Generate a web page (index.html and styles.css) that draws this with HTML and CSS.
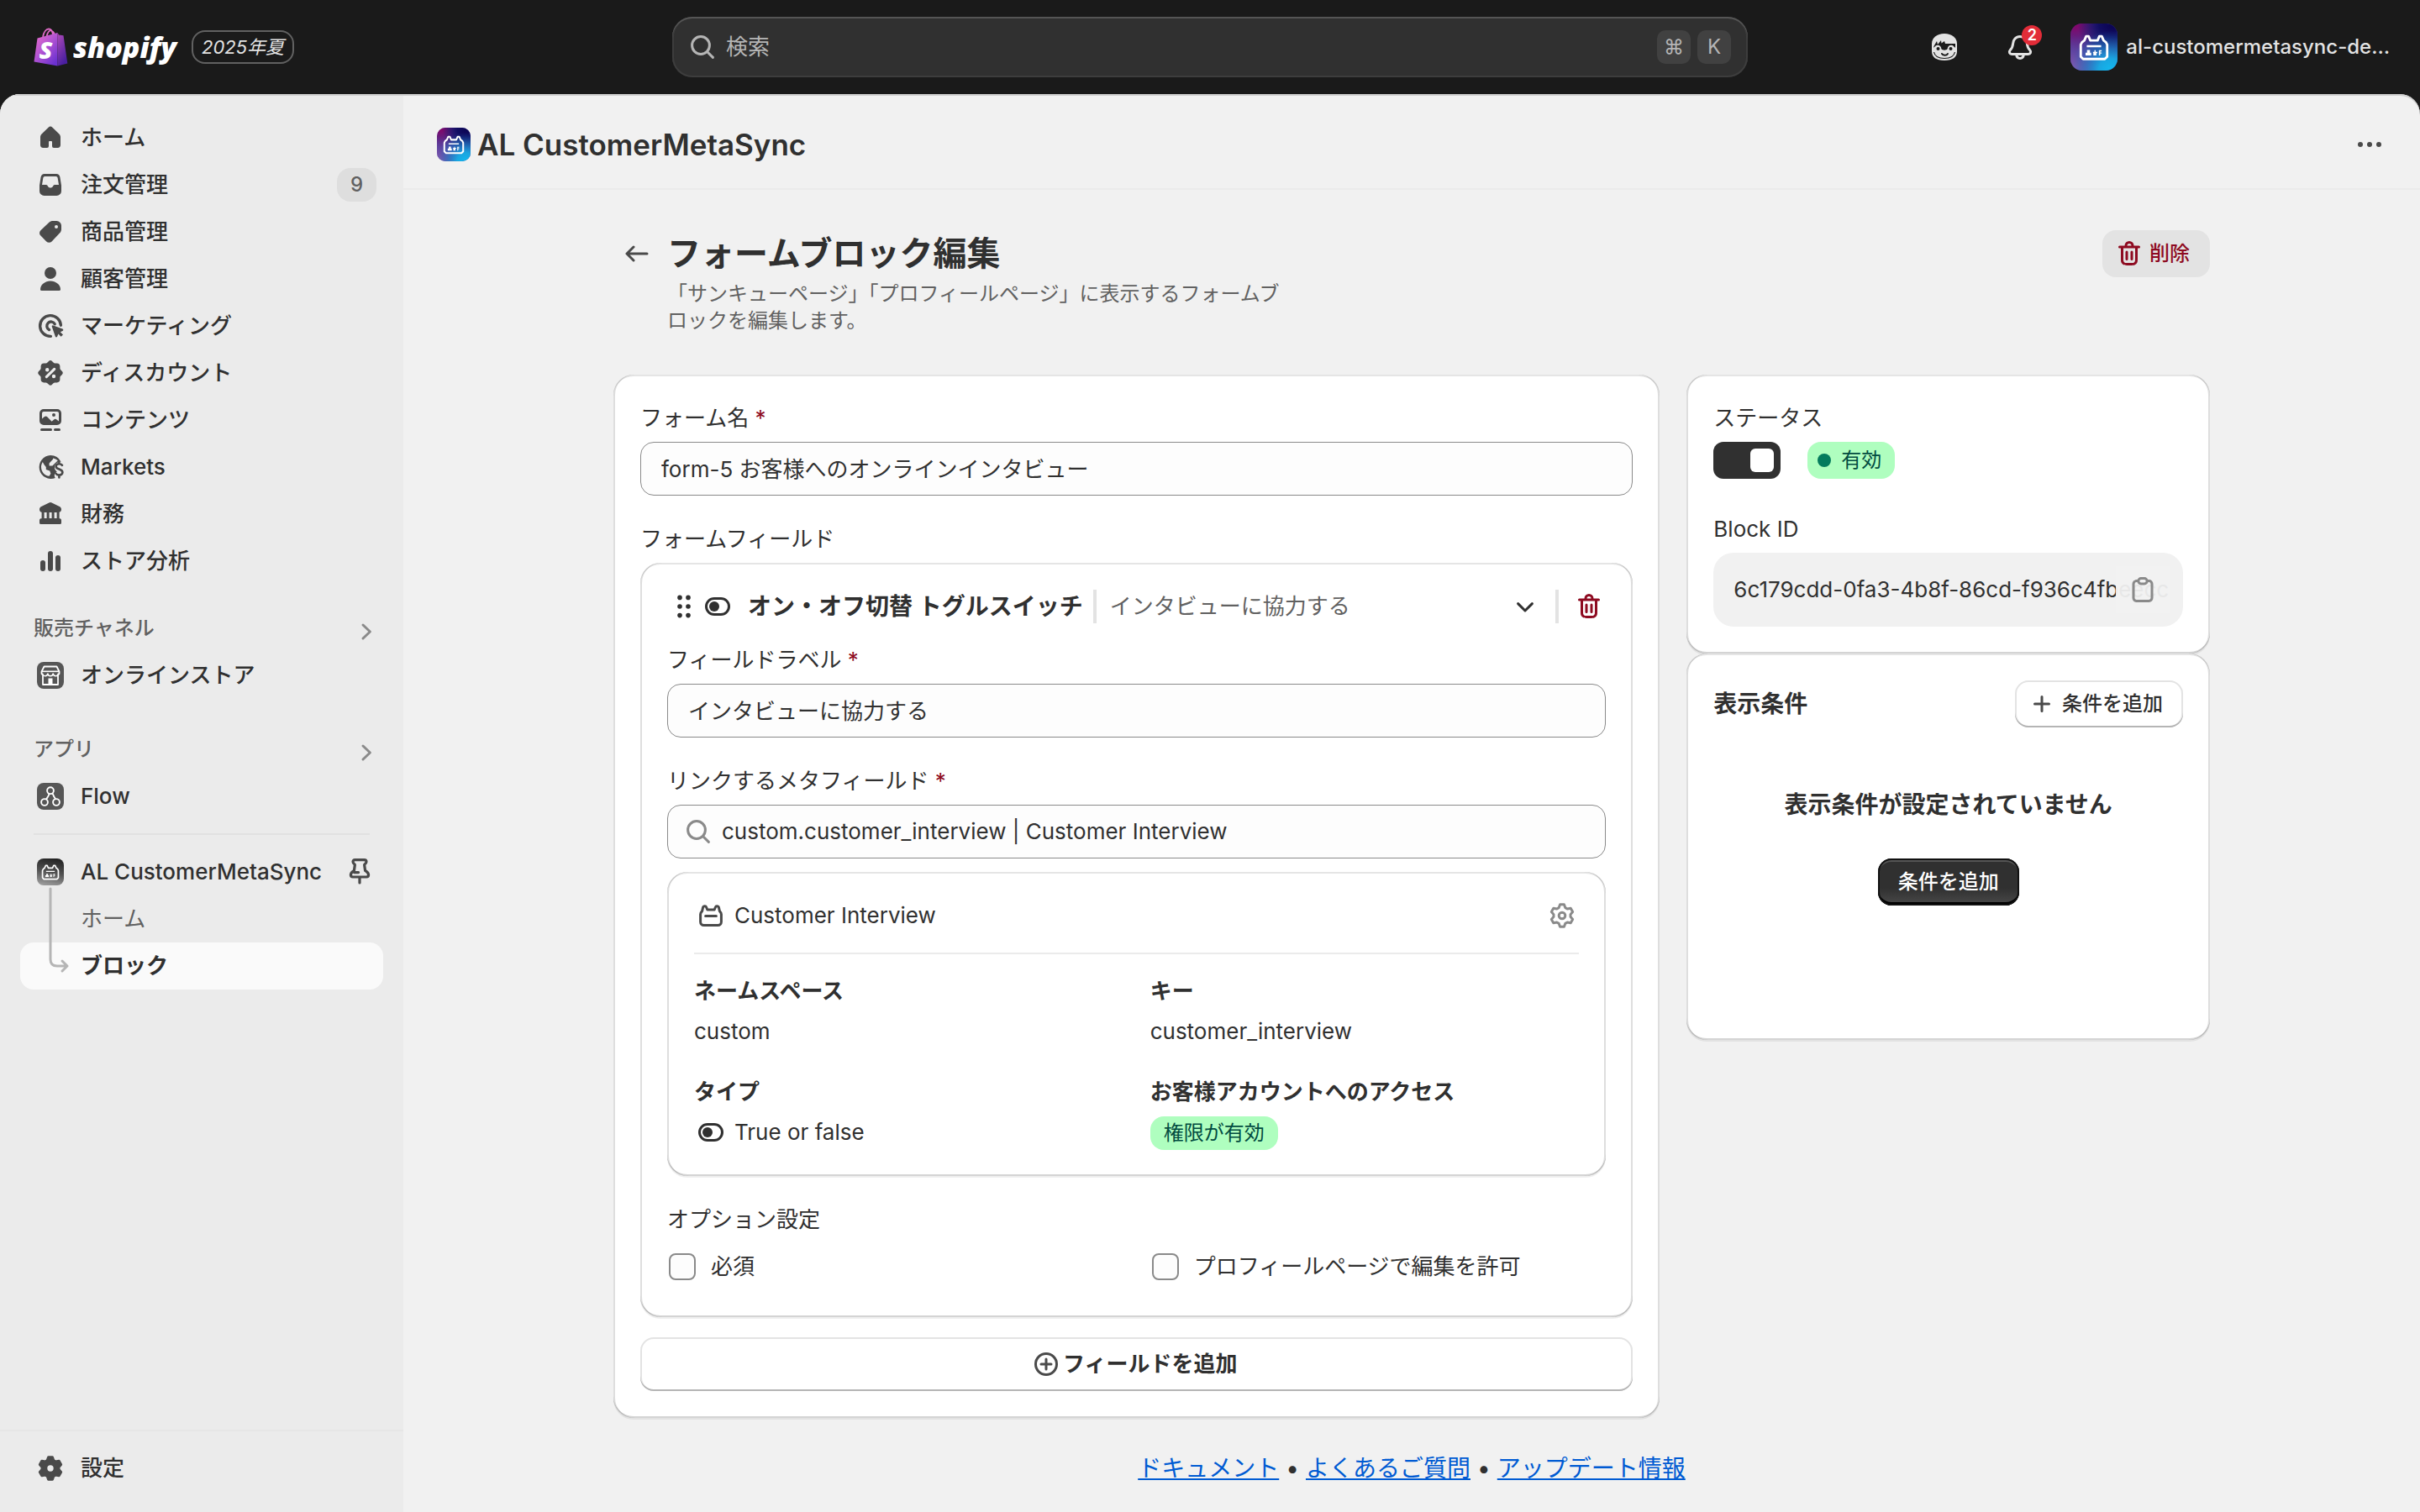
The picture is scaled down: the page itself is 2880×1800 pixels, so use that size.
FILE: index.html
```html
<!DOCTYPE html>
<html lang="ja">
<head>
<meta charset="utf-8">
<meta name="viewport" content="width=device-width, initial-scale=1">
<title>AL CustomerMetaSync</title>
<link rel="stylesheet" href="styles.css">
</head>
<body>
<svg class="sprite" aria-hidden="true">
  <defs>
    <radialGradient id="g-magenta" cx="0.1" cy="0" r="0.6"><stop offset="0" stop-color="#8a0064"/><stop offset="1" stop-color="#8a0064" stop-opacity="0"/></radialGradient>
    <radialGradient id="g-navy" cx="0.9" cy="0" r="0.75"><stop offset="0" stop-color="#0a0350"/><stop offset="0.4" stop-color="#120d62"/><stop offset="1" stop-color="#120d62" stop-opacity="0"/></radialGradient>
    <radialGradient id="g-violet" cx="0" cy="1" r="0.75"><stop offset="0" stop-color="#8a63b4"/><stop offset="1" stop-color="#8a3a9e" stop-opacity="0"/></radialGradient>
    <radialGradient id="g-cyan" cx="0.85" cy="1" r="0.85"><stop offset="0" stop-color="#12b8ee"/><stop offset="0.3" stop-color="#1aa5e0"/><stop offset="1" stop-color="#1a70c0" stop-opacity="0"/></radialGradient>
    <linearGradient id="g-gray" x1="0.6" y1="0" x2="0.4" y2="1"><stop offset="0" stop-color="#242424"/><stop offset="0.5" stop-color="#505050"/><stop offset="1" stop-color="#9a9a9a"/></linearGradient>
    <linearGradient id="g-bag" x1="0" y1="0" x2="0.8" y2="1"><stop offset="0" stop-color="#ee6fcb"/><stop offset="0.5" stop-color="#b354d2"/><stop offset="1" stop-color="#6a30d0"/></linearGradient>
    <linearGradient id="g-bag-side" x1="0" y1="0" x2="0.4" y2="1"><stop offset="0" stop-color="#b04bb8"/><stop offset="1" stop-color="#4a1fa0"/></linearGradient>
  </defs>
  <symbol id="i-home" viewBox="0 0 20 20"><path d="M8.8 3.9a1.7 1.7 0 0 1 2.4 0l4 3.8c.5.5.8 1.200.8 1.900v4.700a1.700 1.700 0 0 1-1.700 1.700H12a1 1 0 0 1-1-1v-2.500a.5.500 0 0 0-.5-.5h-1a.5.500 0 0 0-.5.500v2.500a1 1 0 0 1-1 1H5.700A1.700 1.700 0 0 1 4 14.300V9.600c0-.7.300-1.400.800-1.900Z"/></symbol>
  <symbol id="i-orders" viewBox="0 0 20 20"><path fill-rule="evenodd" d="M6.500 3.500h7a2.300 2.300 0 0 1 2.200 1.900l.8 5v3.300a2.800 2.800 0 0 1-2.800 2.800H6.300a2.800 2.800 0 0 1-2.800-2.800v-3.300l.8-5a2.300 2.300 0 0 1 2.200-1.900Zm.2 1.500a1 1 0 0 0-1 .8L5 10h2.300c.5 0 .9.300 1.100.700.4.700.900 1 1.600 1s1.200-.3 1.600-1c.2-.4.600-.7 1.100-.7H15l-.7-4.200a1 1 0 0 0-1-.8Z"/></symbol>
  <symbol id="i-tag" viewBox="0 0 20 20"><path fill-rule="evenodd" d="M11.500 3.500h2.200a2.800 2.800 0 0 1 2.800 2.800v2.200c0 .900-.4 1.700-1 2.300l-4.700 4.900a2.200 2.200 0 0 1-3.200 0l-3.400-3.400a2.200 2.200 0 0 1 0-3.200l5-4.700c.6-.6 1.400-.9 2.300-.9Zm2 4.500a1 1 0 1 0 0-2 1 1 0 0 0 0 2Z"/></symbol>
  <symbol id="i-person" viewBox="0 0 20 20"><circle cx="10" cy="6.500" r="3.500"/><path d="M4 16.200c0-2.800 2.900-5 6-5s6 2.200 6 5a.8.8 0 0 1-.8.800H4.800a.8.8 0 0 1-.8-.8Z"/></symbol>
  <symbol id="i-target" viewBox="0 0 20 20"><path fill="none" stroke="currentColor" stroke-width="1.700" stroke-linecap="round" d="M16.200 9.600a6.200 6.200 0 1 0-6 6.600M12.600 8.900a2.500 2.500 0 1 0-3.300 3.400"/><path d="M10.900 10.500c-.2-.6.300-1 .8-.8l5.500 2.100c.6.200.6 1 0 1.200l-1.300.6 1.600 1.600-1.200 1.200-1.600-1.600-.6 1.500c-.2.600-1 .6-1.200 0Z"/></symbol>
  <symbol id="i-discount" viewBox="0 0 20 20"><path fill-rule="evenodd" d="M8.900 3.100a1.500 1.500 0 0 1 2.200 0l.8.8c.2.200.400.3.700.3h1.200a1.900 1.900 0 0 1 1.900 1.900v1.200c0 .300.100.500.300.700l.8.900a1.500 1.500 0 0 1 0 2.200l-.8.800c-.2.200-.3.400-.3.700v1.200a1.900 1.900 0 0 1-1.900 1.900h-1.200c-.3 0-.5.100-.7.300l-.8.800a1.500 1.500 0 0 1-2.200 0l-.9-.8a1 1 0 0 0-.7-.3H6.200a1.900 1.900 0 0 1-1.900-1.900v-1.200a1 1 0 0 0-.3-.7l-.8-.8a1.500 1.500 0 0 1 0-2.200l.8-.9a1 1 0 0 0 .3-.7V6.100a1.900 1.900 0 0 1 1.900-1.900h1.200a1 1 0 0 0 .7-.3ZM8.100 9.200a1.100 1.100 0 1 0 0-2.200 1.100 1.100 0 0 0 0 2.200Zm3.900 3.900a1.100 1.100 0 1 0 0-2.200 1.100 1.100 0 0 0 0 2.200Zm.9-4.900a.75.75 0 0 0-1.100-1.100l-4.700 4.700a.75.75 0 0 0 1.100 1.100Z"/></symbol>
  <symbol id="i-content" viewBox="0 0 20 20"><path fill-rule="evenodd" d="M6 3.500h8A2.500 2.500 0 0 1 16.500 6v4.500A2.500 2.500 0 0 1 14 13H6a2.500 2.500 0 0 1-2.500-2.500V6A2.500 2.500 0 0 1 6 3.500ZM6 5a1 1 0 0 0-1 1v3.200L6.500 8a1.200 1.200 0 0 1 1.600.1l2.700 2.800 1.300-1.200a1.200 1.200 0 0 1 1.600 0l1.300 1.100V6a1 1 0 0 0-1-1Zm6 3a1 1 0 1 0 0-2 1 1 0 0 0 0 2Z"/><rect x="4" y="15" width="7" height="1.500" rx=".75"/><rect x="12" y="15" width="4" height="1.500" rx=".75"/></symbol>
  <symbol id="i-globe" viewBox="0 0 20 20"><path fill-rule="evenodd" d="M10 3a7 7 0 0 1 6.300 3.900c-1.800-.1-3.500 1-3.800 2.900-.2 1.300.4 2.300 1.400 3-.9.500-1.500 1.300-1.500 2.300 0 .500.200 1 .5 1.400A7 7 0 1 1 10 3Zm1.600 1.700-.1.700-2.200 2.300v1.500h1.900l3.200-3.100a5.500 5.500 0 0 0-2.800-1.400ZM5.400 7l.9 1.600 1.100 1.400v1.500l2.200.8.6 1.600-.9 1.500c-2.700-.2-4.800-2.500-4.800-5.400 0-1 .3-2.100.9-3Z"/><path fill="none" stroke="currentColor" stroke-width="1.300" stroke-linecap="round" d="M17 8.900c-.5-.6-1.200-.8-1.900-.8-1 0-1.800.6-1.800 1.500 0 2.100 3.900 1.200 3.900 3.500 0 1-.9 1.700-2 1.700-.9 0-1.600-.4-2-1M15.200 7.200v.8M15.200 15v1.200"/></symbol>
  <symbol id="i-bank" viewBox="0 0 20 20"><path d="M9.200 3.200a1.800 1.800 0 0 1 1.600 0l4.600 2.300c.700.3 1.100 1 1.100 1.700 0 1-.7 1.800-1.700 1.800H5.200c-1 0-1.700-.8-1.700-1.800 0-.7.400-1.400 1.100-1.700ZM4.800 9h1.500v4H4.800Zm3 0h1.500v4H7.800Zm3 0h1.500v4h-1.500Zm3 0h1.500v4h-1.500ZM4.800 12.500h10.400a1.300 1.300 0 0 1 1.300 1.300v1.400a.8.8 0 0 1-.8.800H4.300a.8.8 0 0 1-.8-.8v-1.400a1.300 1.300 0 0 1 1.300-1.300Z"/></symbol>
  <symbol id="i-bars" viewBox="0 0 20 20"><rect x="4" y="9.500" width="3" height="6.500" rx="1.500"/><rect x="8.500" y="4" width="3" height="12" rx="1.500"/><rect x="13" y="6.500" width="3" height="9.500" rx="1.500"/></symbol>
  <symbol id="i-store" viewBox="0 0 32 32"><rect width="32" height="32" rx="8" fill="#565656"/><path fill="none" stroke="#fff" stroke-width="1.800" stroke-linejoin="round" d="M8.500 5.500h15l3 6v2.500l-1.500 1.500V27H7V15.500L5.500 14v-2.500Z"/><path fill="#fff" d="M6 10.500h20v1.600H6Z"/><path fill="none" stroke="#fff" stroke-width="1.500" d="M6.500 13.500a3 3 0 0 0 6.300 0 3 3 0 0 0 6.400 0 3 3 0 0 0 6.300 0"/><path fill="#fff" d="M13.500 26.500v-7h5v7Z"/></symbol>
  <symbol id="i-flow" viewBox="0 0 32 32"><rect width="32" height="32" rx="8" fill="#565656"/><g fill="none" stroke="#fff" stroke-width="1.900"><circle cx="16" cy="9.200" r="3.900"/><circle cx="9" cy="23" r="3.900"/><circle cx="23" cy="23" r="3.900"/><path d="M14.500 13c-.3 3-2.500 4.500-3.500 6.500M18.500 12.500c.5 1.500 1.500 2.500 1.500 3.500l2 3"/></g></symbol>
  <symbol id="i-cat" viewBox="0 0 28 28"><path fill="none" stroke="#fff" stroke-width="2" stroke-linejoin="round" d="M7.500 5h2l1.500 3.500h6L18.500 5h2L22 8.500l2 1.500 1 2V22l-2 2H5l-2-2V12l1-2 2-1.500Z"/><path fill="#fff" d="M8 12.500h12v1.600H8ZM8.200 16.500h2.500v2.200h1V21H7v-2.300h1.200Zm5 1.500h1.200v-1.300h1V18h1.400v1H16v2h-2.500v-2h-.3Zm4.900-1.300h2.300v1h-1.200v.8h1.200v1h-1.200V21h-1.100Z"/></symbol>
  <symbol id="i-app" viewBox="0 0 56 56"><rect width="56" height="56" rx="14" fill="#3d3f9c"/><rect width="56" height="56" rx="14" fill="url(#g-magenta)"/><rect width="56" height="56" rx="14" fill="url(#g-navy)"/><rect width="56" height="56" rx="14" fill="url(#g-violet)"/><rect width="56" height="56" rx="14" fill="url(#g-cyan)"/><use href="#i-cat" x="7" y="8" width="42" height="40"/></symbol>
  <symbol id="i-app-gray" viewBox="0 0 32 32"><rect width="32" height="32" rx="8" fill="url(#g-gray)"/><use href="#i-cat" x="4" y="4" width="24" height="24"/></symbol>
  <symbol id="i-pin" viewBox="0 0 20 20"><path fill="none" stroke="currentColor" stroke-width="1.600" stroke-linejoin="round" stroke-linecap="round" d="M7.200 2.800h5.600c.8 0 1.200.5 1.200 1.200 0 .8-.6 1.200-1.200 1.700l.5 3.500c1.300.8 2 1.700 2 2.600 0 .7-.4 1.200-1.200 1.200H5.900c-.8 0-1.200-.5-1.200-1.200 0-.9.7-1.800 2-2.600l.5-3.500C6.600 5.200 6 4.800 6 4c0-.7.4-1.200 1.200-1.200ZM6.800 10.300h2.500M10 13v3.500"/></symbol>
  <symbol id="i-chevron-right" viewBox="0 0 20 20"><path fill="none" stroke="currentColor" stroke-width="1.500" stroke-linecap="round" stroke-linejoin="round" d="m8 6 4.200 4L8 14"/></symbol>
  <symbol id="i-chevron-down" viewBox="0 0 20 20"><path fill="none" stroke="currentColor" stroke-width="1.500" stroke-linecap="round" stroke-linejoin="round" d="m5.800 8.300 4.200 4.200 4.200-4.200"/></symbol>
  <symbol id="i-gear" viewBox="0 0 20 20"><path fill="none" stroke="currentColor" stroke-width="1.500" stroke-linejoin="round" d="M8.100 5.300 8.800 3.400h2.400l.7 1.900 1.220.7 2-.34 1.200 2.080-1.300 1.560v1.400l1.300 1.560-1.200 2.080-2-.34-1.220.7-.7 1.900H8.800l-.7-1.900-1.220-.7-2 .34-1.200-2.080 1.300-1.560V9.300l-1.300-1.560 1.200-2.080 2 .34Z"/><circle cx="10" cy="10" r="1.900" fill="none" stroke="currentColor" stroke-width="1.500"/></symbol>
  <symbol id="i-gear-solid" viewBox="0 0 20 20"><path fill-rule="evenodd" stroke="currentColor" stroke-width="1.500" stroke-linejoin="round" d="M8.100 5.300 8.800 3.400h2.400l.7 1.900 1.220.7 2-.34 1.200 2.080-1.300 1.560v1.400l1.300 1.560-1.200 2.080-2-.34-1.220.7-.7 1.900H8.800l-.7-1.900-1.220-.7-2 .34-1.200-2.080 1.300-1.560V9.300l-1.300-1.560 1.200-2.080 2 .34ZM10 12.600a2.600 2.600 0 1 0 0-5.200 2.600 2.600 0 0 0 0 5.200Z"/></symbol>
  <symbol id="i-search" viewBox="0 0 20 20"><g fill="none" stroke="currentColor" stroke-width="1.500" stroke-linecap="round"><circle cx="9" cy="9" r="5.200"/><path d="m13 13 3.200 3.200"/></g></symbol>
  <symbol id="i-face" viewBox="0 0 32 32"><path fill="#e3e3e3" d="M16 0C7 0 1 5 1 12v9c0 7 5 11 15 11s15-4 15-11v-9C31 5 25 0 16 0Z"/><path fill="#1a1a1a" d="m4 14 3-5 1 4 4-5 .5 3.500L16 9l1 3h12v4.500c-4-1.500-8 0-9.500 2-1.500 1.500-5.500 1.500-7 0-2-2.500-6-3.500-9.500-2Z"/><circle cx="8" cy="18" r="4.300" fill="#e3e3e3"/><circle cx="24" cy="18" r="4.300" fill="#e3e3e3"/><circle cx="8.500" cy="18" r="2" fill="#1a1a1a"/><circle cx="23.500" cy="18" r="2" fill="#1a1a1a"/><path fill="none" stroke="#1a1a1a" stroke-width="2" stroke-linecap="round" d="M13 24c1 2 5.500 2.500 7 0"/><path fill="none" stroke="#1a1a1a" stroke-width="1.200" d="M3.500 22c1 5 4.500 7.500 12.500 7.500S27.500 27 28.500 22"/></symbol>
  <symbol id="i-bell" viewBox="0 0 20 20"><path fill="none" stroke="currentColor" stroke-width="1.500" stroke-linejoin="round" d="M10 3.700c-2.500 0-4.100 1.900-4.200 4.300-.1 1.700-.5 2.600-1.700 3.900-.9 1-.3 2.300 1 2.300h9.800c1.300 0 1.900-1.300 1-2.300-1.200-1.300-1.600-2.200-1.700-3.900-.1-2.400-1.700-4.300-4.200-4.300ZM7.800 14.500c.2 1.400 1 2.200 2.200 2.200s2-.8 2.200-2.200"/></symbol>
  <symbol id="i-dots" viewBox="0 0 20 20"><circle cx="4.500" cy="10" r="1.500"/><circle cx="10" cy="10" r="1.500"/><circle cx="15.500" cy="10" r="1.500"/></symbol>
  <symbol id="i-back" viewBox="0 0 20 20"><path fill="none" stroke="currentColor" stroke-width="1.500" stroke-linecap="round" stroke-linejoin="round" d="M16 10H4.300M8 6l-4 4 4 4"/></symbol>
  <symbol id="i-trash" viewBox="0 0 20 20"><path d="M11.500 8.250a.75.75 0 0 1 .75.75v4.250a.75.75 0 0 1-1.500 0V9a.75.75 0 0 1 .75-.75ZM9.250 9a.75.75 0 0 0-1.500 0v4.250a.75.75 0 0 0 1.500 0V9Z"/><path fill-rule="evenodd" d="M7.250 5.250a2.750 2.750 0 0 1 5.500 0h3a.75.75 0 0 1 0 1.500H15v5.450c0 1.680 0 2.520-.327 3.162a3 3 0 0 1-1.311 1.311c-.642.327-1.482.327-3.162.327h-.4c-1.680 0-2.520 0-3.162-.327a3 3 0 0 1-1.311-1.311C5 14.720 5 13.880 5 12.200V6.750h-.75a.75.75 0 0 1 0-1.500h3Zm1.500 0a1.250 1.250 0 1 1 2.500 0h-2.500Zm-2.250 1.500h7v5.450c0 .865-.001 1.423-.036 1.848-.033.408-.09.559-.128.633a1.500 1.500 0 0 1-.655.655c-.074.038-.225.095-.633.128-.425.035-.983.036-1.848.036h-.4c-.865 0-1.423-.001-1.848-.036-.408-.033-.559-.09-.633-.128a1.500 1.500 0 0 1-.656-.655c-.037-.074-.094-.225-.127-.633-.035-.425-.036-.983-.036-1.848V6.750Z"/></symbol>
  <symbol id="i-drag" viewBox="0 0 20 20"><circle cx="7.500" cy="4.700" r="1.400"/><circle cx="12.500" cy="4.700" r="1.400"/><circle cx="7.500" cy="10" r="1.400"/><circle cx="12.500" cy="10" r="1.400"/><circle cx="7.500" cy="15.300" r="1.400"/><circle cx="12.500" cy="15.300" r="1.400"/></symbol>
  <symbol id="i-toggle" viewBox="0 0 20 20"><rect x="3.250" y="5.250" width="13.500" height="9.500" rx="4.750" fill="none" stroke="currentColor" stroke-width="1.500"/><circle cx="8" cy="10" r="3"/></symbol>
  <symbol id="i-metafield" viewBox="0 0 20 20"><path fill="none" stroke="currentColor" stroke-width="1.500" stroke-linejoin="round" stroke-linecap="round" d="M3.800 9.300c0-1 .5-1.500 1-2l.5-2.200c.2-.9 1.700-1 2-.1l.6 1.500h4.200l.6-1.500c.3-.9 1.800-.8 2 .1l.5 2.200c.5.500 1 1 1 2v4.500a2 2 0 0 1-2 2H5.800a2 2 0 0 1-2-2ZM6.800 10.300h6.400"/></symbol>
  <symbol id="i-clipboard" viewBox="0 0 20 20"><path fill="none" stroke="currentColor" stroke-width="1.500" stroke-linejoin="round" d="M7.500 4.800H6.300a1.800 1.800 0 0 0-1.800 1.800v8.300a1.800 1.800 0 0 0 1.800 1.800h7.400a1.800 1.800 0 0 0 1.800-1.800V6.600a1.800 1.800 0 0 0-1.800-1.800h-1.200M9 3.300h2a1.500 1.500 0 0 1 0 3.200H9a1.500 1.500 0 0 1 0-3.200Z"/></symbol>
  <symbol id="i-plus" viewBox="0 0 20 20"><path fill="none" stroke="currentColor" stroke-width="1.500" stroke-linecap="round" d="M10 5.750v8.500M5.750 10h8.500"/></symbol>
  <symbol id="i-plus-circle" viewBox="0 0 20 20"><g fill="none" stroke="currentColor" stroke-width="1.500" stroke-linecap="round"><circle cx="10" cy="10" r="6.250"/><path d="M10 7v6M7 10h6"/></g></symbol>
</svg>

<header class="topbar">
  <div class="brand-group">
    <a class="brand" href="#">
      <svg class="brand-bag" viewBox="0 0 40 46" aria-hidden="true">
        <path fill="none" stroke="#e06cc8" stroke-width="1.800" d="M10.500 11C11.500 5 14.500 1.500 17.500 1.500c3 0 4.500 3 5 7M15 10.500C16 5 18.500 3 20.500 3.500S24 6 24.500 8.500"/>
        <path fill="url(#g-bag)" d="M4 12.500 28 6v39.500L0 40.500Z"/>
        <path fill="url(#g-bag-side)" d="m28 6 1.500 2.500 5.500.7 4.800 33.300L28 45.500Z"/>
        <text class="brand-letter" x="6" y="37">S</text>
      </svg>
      <span class="brand-name">shopify</span>
    </a>
    <span class="edition">2025年夏</span>
  </div>
  <label class="search">
    <svg class="icon"><use href="#i-search"/></svg>
    <input class="search-input" type="search" placeholder="検索" aria-label="検索">
    <kbd class="key">⌘</kbd>
    <kbd class="key">K</kbd>
  </label>
  <div class="account">
    <button class="bar-button" type="button" aria-label="Sidekick"><svg class="icon face"><use href="#i-face"/></svg></button>
    <button class="bar-button" type="button" aria-label="通知"><svg class="icon"><use href="#i-bell"/></svg><span class="alert-count">2</span></button>
    <button class="store" type="button"><svg class="store-logo"><use href="#i-app"/></svg><span>al-customermetasync-de…</span></button>
  </div>
</header>

<div class="frame">
  <aside class="sidebar">
    <nav class="nav">
      <ul class="nav-list">
        <li><a class="nav-item" href="#"><svg class="icon"><use href="#i-home"/></svg>ホーム</a></li>
        <li><a class="nav-item" href="#"><svg class="icon"><use href="#i-orders"/></svg>注文管理<span class="count">9</span></a></li>
        <li><a class="nav-item" href="#"><svg class="icon"><use href="#i-tag"/></svg>商品管理</a></li>
        <li><a class="nav-item" href="#"><svg class="icon"><use href="#i-person"/></svg>顧客管理</a></li>
        <li><a class="nav-item" href="#"><svg class="icon"><use href="#i-target"/></svg>マーケティング</a></li>
        <li><a class="nav-item" href="#"><svg class="icon"><use href="#i-discount"/></svg>ディスカウント</a></li>
        <li><a class="nav-item" href="#"><svg class="icon"><use href="#i-content"/></svg>コンテンツ</a></li>
        <li><a class="nav-item" href="#"><svg class="icon"><use href="#i-globe"/></svg>Markets</a></li>
        <li><a class="nav-item" href="#"><svg class="icon"><use href="#i-bank"/></svg>財務</a></li>
        <li><a class="nav-item" href="#"><svg class="icon"><use href="#i-bars"/></svg>ストア分析</a></li>
      </ul>
      <section class="nav-section">
        <button class="nav-heading" type="button">販売チャネル<svg class="icon"><use href="#i-chevron-right"/></svg></button>
        <a class="nav-item" href="#"><svg class="icon app"><use href="#i-store"/></svg>オンラインストア</a>
      </section>
      <section class="nav-section">
        <button class="nav-heading" type="button">アプリ<svg class="icon"><use href="#i-chevron-right"/></svg></button>
        <a class="nav-item" href="#"><svg class="icon app"><use href="#i-flow"/></svg>Flow</a>
      </section>
      <section class="pinned">
        <a class="nav-item" href="#"><svg class="icon app"><use href="#i-app-gray"/></svg>AL CustomerMetaSync<svg class="icon pin"><use href="#i-pin"/></svg></a>
        <ul class="subnav">
          <li><a class="nav-item sub" href="#">ホーム</a></li>
          <li><a class="nav-item sub current" href="#" aria-current="page">ブロック</a></li>
        </ul>
        <svg class="branch" viewBox="0 0 28 104" aria-hidden="true"><path fill="none" stroke="#b5b5b5" stroke-width="3" stroke-linecap="round" stroke-linejoin="round" d="M4 2v84q0 8 8 8h12m-6-6 6 6-6 6"/></svg>
      </section>
    </nav>
    <div class="sidebar-foot">
      <a class="nav-item" href="#"><svg class="icon"><use href="#i-gear-solid"/></svg>設定</a>
    </div>
  </aside>

  <main class="main">
    <div class="app-bar">
      <svg class="app-logo"><use href="#i-app"/></svg>
      <span class="app-name">AL CustomerMetaSync</span>
      <button class="more" type="button" aria-label="その他"><svg class="icon"><use href="#i-dots"/></svg></button>
    </div>

    <div class="page">
      <div class="page-head">
        <a class="back" href="#" aria-label="戻る"><svg class="icon"><use href="#i-back"/></svg></a>
        <div class="page-title">
          <h1>フォームブロック編集</h1>
          <p>「サンキューページ」「プロフィールページ」に表示するフォームブロックを編集します。</p>
        </div>
        <button class="button danger" type="button"><svg class="icon"><use href="#i-trash"/></svg>削除</button>
      </div>

      <div class="columns">
        <form class="card form-card">
          <label class="label" for="form-name">フォーム名 <span class="required">*</span></label>
          <input class="field" id="form-name" type="text" value="form-5 お客様へのオンラインインタビュー">

          <p class="label spaced">フォームフィールド</p>
          <section class="card block">
            <div class="block-head">
              <svg class="icon"><use href="#i-drag"/></svg>
              <svg class="icon"><use href="#i-toggle"/></svg>
              <h2>オン・オフ切替 トグルスイッチ</h2>
              <span class="rule"></span>
              <span class="block-note">インタビューに協力する</span>
              <button class="plain" type="button" aria-label="折りたたむ"><svg class="icon"><use href="#i-chevron-down"/></svg></button>
              <span class="rule"></span>
              <button class="plain critical" type="button" aria-label="フィールドを削除"><svg class="icon"><use href="#i-trash"/></svg></button>
            </div>

            <label class="label" for="field-label">フィールドラベル <span class="required">*</span></label>
            <input class="field" id="field-label" type="text" value="インタビューに協力する">

            <label class="label spaced" for="metafield">リンクするメタフィールド <span class="required">*</span></label>
            <div class="field search-field">
              <svg class="icon"><use href="#i-search"/></svg>
              <input id="metafield" type="text" value="custom.customer_interview | Customer Interview">
            </div>

            <section class="card definition">
              <div class="definition-head">
                <svg class="icon"><use href="#i-metafield"/></svg>
                <span>Customer Interview</span>
                <button class="plain muted" type="button" aria-label="設定"><svg class="icon"><use href="#i-gear"/></svg></button>
              </div>
              <dl class="facts">
                <div><dt>ネームスペース</dt><dd>custom</dd></div>
                <div><dt>キー</dt><dd>customer_interview</dd></div>
                <div><dt>タイプ</dt><dd class="with-icon"><svg class="icon"><use href="#i-toggle"/></svg>True or false</dd></div>
                <div><dt>お客様アカウントへのアクセス</dt><dd><span class="badge">権限が有効</span></dd></div>
              </dl>
            </section>

            <fieldset class="options">
              <legend class="label">オプション設定</legend>
              <label class="option"><input class="tick" type="checkbox">必須</label>
              <label class="option"><input class="tick" type="checkbox">プロフィールページで編集を許可</label>
            </fieldset>
          </section>

          <button class="button add-field" type="button"><svg class="icon"><use href="#i-plus-circle"/></svg>フィールドを追加</button>
        </form>

        <div class="aside">
          <section class="card status-card">
            <label class="label" for="status">ステータス</label>
            <div class="status-row">
              <input class="switch" id="status" type="checkbox" role="switch" checked>
              <span class="badge status"><span class="dot"></span>有効</span>
            </div>
            <p class="label spaced-small">Block ID</p>
            <div class="block-id">
              <span class="block-id-text">6c179cdd-0fa3-4b8f-86cd-f936c4fbeecc</span>
              <button class="copy" type="button" aria-label="コピー"><svg class="icon"><use href="#i-clipboard"/></svg></button>
            </div>
          </section>

          <section class="card condition-card">
            <div class="condition-head">
              <h2>表示条件</h2>
              <button class="button with-plus" type="button"><svg class="icon"><use href="#i-plus"/></svg>条件を追加</button>
            </div>
            <p class="empty">表示条件が設定されていません</p>
            <button class="button primary" type="button">条件を追加</button>
          </section>
        </div>
      </div>

      <footer class="links">
        <a href="#">ドキュメント</a><span>•</span><a href="#">よくあるご質問</a><span>•</span><a href="#">アップデート情報</a>
      </footer>
    </div>
  </main>
</div>
</body>
</html>
```
FILE: styles.css
```css
* { box-sizing: border-box; }

body {
  margin: 0;
  min-height: 100vh;
  display: flex;
  flex-direction: column;
  background: #1a1a1a;
  color: #303030;
  font: 400 26px/40px Inter, "Noto Sans CJK JP", sans-serif;
}

h1, h2, p, dl, dd, ul, fieldset { margin: 0; padding: 0; }
ul { list-style: none; }
fieldset { border: 0; min-width: 0; }
a { color: inherit; text-decoration: none; }
button, input, kbd { font: inherit; color: inherit; }
button { border: 0; padding: 0; background: none; cursor: pointer; }

.sprite { position: absolute; width: 0; height: 0; }
.icon { width: 40px; height: 40px; flex: none; fill: currentColor; display: block; }

/* Top bar */
.topbar {
  height: 112px;
  display: grid;
  grid-template-columns: minmax(max-content, 1fr) minmax(0, 1280px) minmax(max-content, 1fr);
  align-items: center;
  padding: 0 36px;
  color: #e3e3e3;
}
.brand-group { display: flex; align-items: center; padding-left: 4px; }
.brand { display: flex; align-items: center; gap: 6px; width: 188px; }
.brand-bag { width: 41px; height: 46px; flex: none; }
.brand-letter { font: italic 800 29px "Open Sans", sans-serif; fill: #fff; }
.brand-name { font: italic 800 34px/44px "Open Sans", sans-serif; color: #fff; }
.edition {
  padding: 0 10px;
  border: 2px solid #616161;
  border-radius: 16px;
  font-size: 22px;
  line-height: 36px;
  font-style: italic;
  white-space: nowrap;
}
.search {
  height: 72px;
  display: flex;
  align-items: center;
  gap: 8px;
  padding: 0 20px 0 16px;
  border-radius: 24px;
  background: #303030;
  color: #b5b5b5;
  box-shadow: inset 0 2px #555, inset 0 0 0 2px #3d3d3d;
}
.search-input {
  flex: 1;
  min-width: 0;
  border: 0;
  padding: 0;
  background: none;
  outline: 0;
}
.search-input::placeholder { color: #b5b5b5; opacity: 1; }
.key {
  width: 40px;
  height: 40px;
  border-radius: 10px;
  background: #414141;
  font-size: 24px;
  text-align: center;
}
.account { display: flex; align-items: center; justify-content: flex-end; gap: 30px; }
.bar-button { position: relative; width: 60px; height: 56px; display: grid; place-items: center; }
.face { width: 32px; height: 32px; }
.alert-count {
  position: absolute;
  top: 2px;
  right: 4px;
  width: 24px;
  height: 24px;
  border-radius: 12px;
  background: #e22c38;
  color: #fff;
  font-size: 18px;
  line-height: 24px;
  font-weight: 600;
}
.store { display: flex; align-items: center; gap: 10px; font-size: 24px; font-weight: 500; white-space: nowrap; }
.store-logo { width: 56px; height: 56px; }

/* Frame */
.frame {
  flex: 1;
  display: flex;
  overflow: hidden;
  border-radius: 24px 24px 0 0;
  background: #f1f1f1;
  box-shadow: inset 0 2px #cfcfcf;
}
.sidebar {
  width: 480px;
  flex: none;
  display: flex;
  flex-direction: column;
  justify-content: space-between;
  background: #ebebeb;
  box-shadow: inset 0 2px #cfcfcf;
}
.nav { padding: 24px 24px 0; }
.nav-item {
  height: 56px;
  display: flex;
  align-items: center;
  gap: 16px;
  padding: 0 8px 0 16px;
  border-radius: 16px;
  font-weight: 550;
  white-space: nowrap;
}
.nav-item .icon { color: #4a4a4a; }
.nav-item .app { width: 32px; height: 32px; margin: 0 4px; }
.nav-item .pin { margin-left: auto; }
.count {
  margin-left: auto;
  padding: 0 16px;
  border-radius: 16px;
  background: #dedede;
  color: #616161;
  font-size: 24px;
}
.nav-section { padding: 32px 0 8px; }
.nav-section + .nav-section { padding-bottom: 16px; }
.nav-heading {
  width: 100%;
  height: 48px;
  display: flex;
  align-items: flex-start;
  justify-content: space-between;
  padding-left: 16px;
  color: #616161;
  font-size: 24px;
  font-weight: 550;
}
.nav-heading .icon { align-self: center; color: #8a8a8a; }
.pinned { position: relative; }
.pinned::before {
  content: "";
  display: block;
  height: 2px;
  margin: 0 16px 16px;
  background: #e1e1e1;
}
.nav-item.sub { padding-left: 72px; color: #616161; font-weight: 400; }
.nav-item.current { background: #fafafa; color: #303030; font-weight: 650; }
.branch { position: absolute; left: 32px; top: 64px; width: 28px; height: 104px; }
.sidebar-foot { padding: 16px 24px 24px; border-top: 2px solid #e6e6e6; }

/* Main */
.main { flex: 1; min-width: 0; }
.app-bar {
  height: 114px;
  display: flex;
  align-items: center;
  gap: 8px;
  padding: 8px 40px 0;
  border-bottom: 2px solid #ebebeb;
}
.app-logo { width: 40px; height: 40px; }
.app-name { font-size: 35px; font-weight: 600; }
.more { margin-left: auto; color: #4a4a4a; }
.page { max-width: 1964px; margin: 0 auto; padding: 48px 32px 24px; }
.page-head { display: flex; align-items: flex-start; padding-bottom: 48px; }
.back { padding: 8px 16px 8px 8px; color: #4a4a4a; }
.page-title { max-width: 745px; }
.page-title h1 { font-size: 40px; line-height: 56px; font-weight: 700; }
.page-title p { padding-top: 4px; font-size: 24px; line-height: 32px; color: #616161; }
.columns { display: grid; grid-template-columns: minmax(0, 2fr) minmax(0, 1fr); gap: 32px; align-items: start; }

.card {
  background: #fff;
  border-radius: 24px;
  box-shadow:
    0 2px #1a1a1a12,
    inset 2px 0 #00000021,
    inset -2px 0 #00000021,
    inset 0 -2px #0000002b,
    inset 0 2px #cccccc80;
}
.form-card, .status-card, .condition-card { padding: 32px; }
.label { display: block; padding: 0 0 8px; line-height: 40px; }
.spaced { padding-top: 32px; }
.spaced-small { padding-top: 40px; }
.required { color: #8e0b21; }
.field {
  display: block;
  width: 100%;
  height: 64px;
  padding: 0 24px 4px;
  border: 1px solid #8a8a8a;
  border-radius: 16px;
  background: #fdfdfd;
  outline: 0;
}
.search-field { display: flex; align-items: center; gap: 8px; padding: 0 16px; }
.search-field .icon { color: #8a8a8a; }
.search-field input { flex: 1; min-width: 0; border: 0; padding: 0; background: none; outline: 0; }

.block { padding: 32px 32px 40px; }
.block-head { display: flex; align-items: center; padding-bottom: 24px; }
.block-head h2 { padding: 0 12px 0 16px; font-size: 28px; line-height: 40px; font-weight: 700; white-space: nowrap; }
.rule { width: 4px; height: 40px; background: #e3e3e3; }
.block-note { flex: 1; padding-left: 16px; color: #616161; }
.plain { display: block; }
.block-head .plain { margin: 0 16px; }
.block-head .plain.critical { margin: 0 0 0 16px; color: #8e0b21; }
.muted { margin-left: auto; color: #8a8a8a; }

.definition { margin-top: 16px; padding: 32px; }
.definition-head { display: flex; align-items: center; gap: 8px; padding-bottom: 24px; border-bottom: 2px solid #ebebeb; }
.definition-head > .icon { color: #4a4a4a; }
.facts { display: grid; grid-template-columns: 1fr 1fr; gap: 32px; padding-top: 24px; }
.facts dt { padding-bottom: 8px; font-weight: 650; }
.facts dd { height: 40px; }
.with-icon { display: flex; gap: 8px; }
.badge {
  display: inline-flex;
  align-items: center;
  height: 40px;
  padding: 0 16px;
  border-radius: 16px;
  background: #affebf;
  color: #014b40;
  font-size: 24px;
}
.options { display: grid; grid-template-columns: 1fr 1fr; column-gap: 32px; padding-top: 32px; }
.options legend { float: left; grid-column: 1 / -1; padding-bottom: 16px; }
.option { display: flex; align-items: center; gap: 18px; }
.tick {
  appearance: none;
  width: 32px;
  height: 32px;
  margin: 0 0 0 2px;
  border: 2px solid #8a8a8a;
  border-radius: 8px;
  background: #fdfdfd;
}

.button {
  height: 56px;
  display: flex;
  align-items: center;
  justify-content: center;
  padding: 0 24px;
  border-radius: 16px;
  background: #fff;
  box-shadow: inset 0 -2px #b5b5b5, inset 0 0 0 2px #e3e3e3;
  font-size: 24px;
  font-weight: 550;
  white-space: nowrap;
}
.button .icon { color: #4a4a4a; }
.button.danger { margin-left: auto; padding: 0 24px 0 12px; gap: 4px; background: #e3e3e3; box-shadow: none; color: #8e0b21; }
.button.danger .icon { color: inherit; }
.button.add-field { width: 100%; height: 64px; margin-top: 24px; padding: 0 32px 0 24px; font-size: 26px; font-weight: 650; }
.button.with-plus { padding: 0 24px 0 12px; gap: 4px; }
.button.primary {
  margin: 44px auto 0;
  background: linear-gradient(#303030 63%, #4a4a4a);
  color: #fff;
  box-shadow: inset 0 0 0 2px #111, inset 0 -4px #000, inset 0 4px #555;
}

.status-row { display: flex; align-items: center; gap: 32px; height: 44px; }
.switch {
  appearance: none;
  width: 80px;
  height: 44px;
  margin: 0;
  padding: 8px;
  border-radius: 12px;
  background: #303030;
}
.switch::before {
  content: "";
  display: block;
  width: 28px;
  height: 28px;
  margin-left: auto;
  border-radius: 6px;
  background: #fff;
}
.badge.status { height: 44px; padding: 0 16px 0 12px; gap: 12px; }
.dot { width: 16px; height: 16px; border-radius: 8px; background: #047b5d; }
.block-id {
  position: relative;
  height: 88px;
  padding: 24px 14px 24px 24px;
  border-radius: 24px;
  background: #f1f1f1;
}
.block-id-text { display: block; overflow: hidden; white-space: nowrap; }
.copy {
  position: absolute;
  right: 16px;
  top: 16px;
  width: 64px;
  height: 56px;
  display: grid;
  place-items: center;
  background: #f1f1f1f2;
  color: #8a8a8a;
}

.condition-card { padding-bottom: 160px; }
.condition-head { display: flex; align-items: center; justify-content: space-between; }
.condition-head h2, .empty { font-size: 28px; line-height: 40px; font-weight: 650; }
.empty { padding-top: 72px; text-align: center; }

.links { display: flex; justify-content: center; gap: 8px; padding-top: 40px; font-size: 28px; }
.links a { color: #005bd3; text-decoration: underline; }
```
